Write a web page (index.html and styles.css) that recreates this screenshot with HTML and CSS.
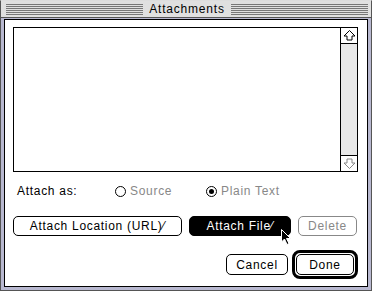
FILE: index.html
```html
<!DOCTYPE html>
<html lang="en">
<head>
    <meta charset="UTF-8">
    <title>Attachments</title>
    <link rel="stylesheet" href="styles.css">
</head>
<body>
    <div class="window">
        <div class="titlebar">
            <div class="stripes"></div>
            <div class="title">Attachments</div>
            <div class="stripes"></div>
        </div>
        <div class="content">
            <div class="list">
                <div class="list-body"></div>
                <div class="scrollbar">
                    <div class="arrow arrow-up">
                        <svg width="15" height="15" viewBox="0 0 15 15"><path d="M7.5 2.5 L13 8 L10 8 L10 12 L5 12 L5 8 L2 8 Z" fill="#fff" stroke="#000" stroke-width="1"/></svg>
                    </div>
                    <div class="track"></div>
                    <div class="arrow arrow-down">
                        <svg width="15" height="15" viewBox="0 0 15 15"><path d="M7.5 12.5 L13 7 L10 7 L10 3 L5 3 L5 7 L2 7 Z" fill="#fff" stroke="#888" stroke-width="1"/></svg>
                    </div>
                </div>
            </div>

            <div class="attach-row">
                <span class="label">Attach as:</span>
                <span class="radio"><span class="dot"></span>Source</span>
                <span class="radio checked"><span class="dot"></span>Plain Text</span>
            </div>

            <div class="button-row">
                <div class="btn btn-url">Attach Location (URL)⁄</div>
                <div class="btn btn-file">Attach File⁄</div>
                <div class="btn btn-delete">Delete</div>
            </div>

            <div class="bottom-row">
                <div class="btn btn-cancel">Cancel</div>
                <div class="default-ring"><div class="btn btn-done">Done</div></div>
            </div>

            <svg class="cursor" width="11" height="17" viewBox="0 0 11 17"><path d="M0.5 0.5 L0.5 13 L3.5 10 L6 15.5 L8 14.5 L5.5 9.5 L9.5 9.5 Z" fill="#000" stroke="#fff" stroke-width="1"/></svg>
        </div>
    </div>
</body>
</html>
```

FILE: styles.css
```css
* {
    margin: 0;
    padding: 0;
    box-sizing: border-box;
}

body {
    width: 372px;
    height: 291px;
    background: #fff;
    font-family: 'Liberation Sans', Arial, sans-serif;
    font-size: 12px;
    letter-spacing: 0.7px;
    color: #000;
    overflow: hidden;
}

.window {
    width: 372px;
    height: 291px;
    display: flex;
    flex-direction: column;
    border: 1px solid #555;
    border-top-color: #ddd;
    background: #b8b8d0;
}

.titlebar {
    height: 17px;
    display: flex;
    align-items: center;
    padding: 0 3px 0 5px;
    background: #e0e0e0;
    border-bottom: 1px solid #555;
}

.stripes {
    flex: 1;
    height: 11px;
    background: repeating-linear-gradient(to bottom, #777 0, #777 1px, #e0e0e0 1px, #e0e0e0 2px);
}

.title {
    padding: 0 6px;
    line-height: 16px;
    letter-spacing: 0.8px;
}

.content {
    position: relative;
    flex: 1;
    margin: 1px 3px 3px 3px;
    border: 1px solid #000;
    background: #fff;
    padding: 7px 9px 0 8px;
}

.list {
    display: flex;
    height: 145px;
    border: 1px solid #000;
}

.list-body {
    flex: 1;
}

.scrollbar {
    width: 17px;
    display: flex;
    flex-direction: column;
    border-left: 1px solid #000;
}

.arrow {
    height: 16px;
    display: flex;
    justify-content: center;
    align-items: center;
    background: #fff;
}

.arrow-up {
    border-bottom: 1px solid #000;
}

.arrow-down {
    border-top: 1px solid #000;
}

.track {
    flex: 1;
    background: #e8e8e8;
}

.attach-row {
    display: flex;
    align-items: center;
    height: 20px;
    margin-top: 9px;
    padding-left: 4px;
}

.label {
    width: 98px;
}

.radio {
    display: flex;
    align-items: center;
    gap: 4px;
    color: #888;
    width: 91px;
}

.dot {
    width: 11px;
    height: 11px;
    border: 1px solid #000;
    border-radius: 50%;
    position: relative;
}

.checked .dot::after {
    content: '';
    position: absolute;
    top: 2px;
    left: 2px;
    width: 5px;
    height: 5px;
    border-radius: 50%;
    background: #000;
}

.button-row {
    display: flex;
    margin-top: 15px;
    gap: 7px;
}

.btn {
    height: 20px;
    display: flex;
    align-items: center;
    justify-content: center;
    border: 1px solid #000;
    border-radius: 5px;
    background: #fff;
}

.btn-url {
    width: 169px;
}

.btn-file {
    width: 102px;
    background: #000;
    color: #fff;
}

.btn-delete {
    width: 59px;
    border-color: #888;
    color: #888;
}

.bottom-row {
    display: flex;
    justify-content: flex-end;
    align-items: center;
    gap: 4px;
    margin-top: 14px;
}

.btn-cancel {
    width: 62px;
    height: 21px;
}

.default-ring {
    border: 3px solid #000;
    border-radius: 8px;
    padding: 1px;
}

.btn-done {
    width: 58px;
    height: 21px;
}

.cursor {
    position: absolute;
    left: 276px;
    top: 209px;
}
```
